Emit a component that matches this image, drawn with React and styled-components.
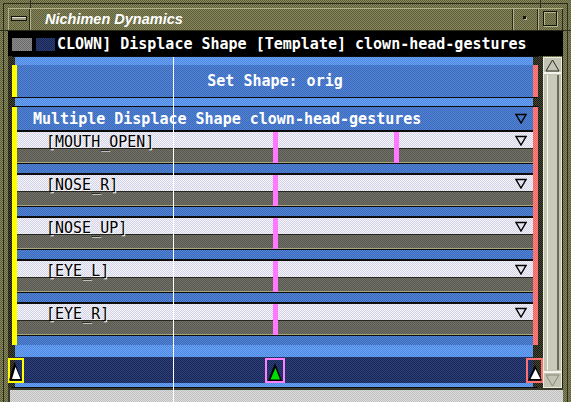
import React from 'react';
import styled, { createGlobalStyle } from 'styled-components';

const dither = (a, b) => `repeating-conic-gradient(${a} 0 25%, ${b} 0 50%) 0 0 / 2px 2px`;

const C = {
  olive: dither('#87875c', '#5e5e3c'),
  dark: dither('#4a4a34', '#1a1a12'),
  lightBlue: dither('#68a2f6', '#4f88dc'),
  blue: dither('#5283d4', '#3c6bbb'),
  navy: dither('#2e4278', '#172558'),
  light: dither('#f4f4fc', '#d2d2e4'),
  gray: dither('#707066', '#5a5a52'),
  status: dither('#dcdcdc', '#c0c0c0'),
  red: dither('#ff8484', '#f26262'),
};

const GlobalStyle = createGlobalStyle`
  html, body { margin: 0; padding: 0; background: #5e5e3c; overflow: hidden; }
  #root { width: 571px; height: 402px; }
`;

const Window = styled.div`
  position: relative;
  width: 571px;
  height: 402px;
  box-sizing: border-box;
  padding: 8px 8px 0;
  background: ${C.olive};
  display: flex;
  flex-direction: column;
  overflow: hidden;
  font-family: "DejaVu Sans Mono", "Liberation Mono", monospace;
`;

const FrameEdge = styled.div`
  position: absolute;
  left: 3px;
  top: 3px;
  right: 3px;
  bottom: -4px;
  border: 1px solid #2c2c1c;
  border-bottom: none;
  pointer-events: none;
`;

const Notch = styled.div`
  position: absolute;
  background: #2c2c1c;
  left: ${p => p.$x}px;
  top: ${p => p.$y}px;
  width: ${p => p.$w}px;
  height: ${p => p.$h}px;
`;

const TitleBar = styled.div`
  display: flex;
  height: 23px;
  flex: none;
  box-sizing: border-box;
  border-top: 1px solid #b2b288;
  border-bottom: 1px solid #2a2a1a;
`;

const TitleCell = styled.div`
  display: flex;
  align-items: center;
  justify-content: ${p => (p.$grow ? 'flex-start' : 'center')};
  flex: ${p => (p.$grow ? '1 1 auto' : `0 0 ${p.$w}px`)};
  box-sizing: border-box;
  border-left: 1px solid #b2b288;
  border-right: 1px solid #2a2a1a;
  padding-left: ${p => (p.$grow ? '14px' : '0')};
`;

const TitleText = styled.span`
  font-family: "Liberation Sans", Arial, sans-serif;
  font-style: italic;
  font-weight: bold;
  font-size: 14.5px;
  color: #ffffff;
  margin-top: -1px;
`;

const MenuGlyph = styled.div`
  width: 14px;
  height: 3px;
  border: 1px solid #141410;
  background: linear-gradient(#e0e0cc 0 1px, #9a9a80 1px);
  margin-top: -2px;
`;

const MinGlyph = styled.div`
  width: 3px;
  height: 3px;
  background: #141410;
  box-shadow: 1px 1px 0 #b8b890;
  margin: -4px 0 0 -2px;
`;

const MaxGlyph = styled.div`
  width: 12px;
  height: 13px;
  border: 1px solid #141410;
  box-shadow: 1px 1px 0 #b8b890, inset 1px 1px 0 #b8b890;
  margin: -2px 0 0 -1px;
`;

const HeaderBar = styled.div`
  display: flex;
  align-items: center;
  height: 25px;
  flex: none;
  background: #000;
  padding-left: 4px;
`;

const Swatch = styled.div`
  width: ${p => p.$w}px;
  height: 13px;
  margin-right: ${p => p.$gap}px;
  background: ${p => p.$bg};
  margin-top: 1px;
`;

const HeaderText = styled.span`
  color: #fff;
  font-weight: bold;
  font-size: 15px;
  white-space: pre;
  margin-top: 1px;
`;

const Main = styled.div`
  display: flex;
  height: 332px;
  flex: none;
`;

const Filler = styled.div`
  flex: 0 0 ${p => p.$w}px;
  background: ${p => p.$bg || C.dark};
`;

const Tracks = styled.div`
  flex: 0 0 526px;
  display: flex;
  flex-direction: column;
  background: ${C.dark};
`;

const Rule = styled.div`
  height: ${p => p.$h}px;
  flex: none;
  background: #0c0c0c;
`;

const Strip = styled.div`
  position: relative;
  height: ${p => p.$h}px;
  flex: none;
  margin: 0 5px 0 3px;
  background: ${p => (p.$navy ? C.navy : C.lightBlue)};
`;

const Lane = styled.div`
  display: flex;
  flex: none;
`;

const EdgeMark = styled.div`
  flex: 0 0 5px;
  background: ${p => (p.$end ? C.red : '#ffff00')};
`;

const SetBar = styled.div`
  flex: 1;
  height: 32px;
  background: ${C.blue};
  display: flex;
  align-items: center;
  justify-content: center;
  color: #fff;
  font-weight: bold;
  font-size: 15px;
  white-space: pre;
`;

const MultiBody = styled.div`
  flex: 1;
  display: flex;
  flex-direction: column;
`;

const MultiHeader = styled.div`
  height: 23px;
  background: ${C.blue};
  display: flex;
  align-items: center;
  justify-content: space-between;
  padding: 0 6px 0 16px;
  color: #fff;
  font-weight: bold;
  font-size: 15px;
  white-space: pre;
`;

const TrackRow = styled.div`
  position: relative;
  display: flex;
  flex-direction: column;
`;

const RowLabel = styled.div`
  height: 16px;
  background: ${C.light};
  display: flex;
  align-items: center;
  justify-content: space-between;
  padding: 0 6px 0 29px;
`;

const LabelText = styled.span`
  position: relative;
  z-index: 1;
  top: 2px;
  color: #000;
  font-size: 15px;
  line-height: 16px;
  white-space: pre;
  text-shadow: 1px 1px 0 #ffffff;
`;

const RowGray = styled.div`
  height: 15px;
  box-sizing: border-box;
  background: ${C.gray};
  border-top: 1px solid #26261e;
  border-bottom: 1px solid #a6a67c;
`;

const RowBlue = styled.div`
  height: 9px;
  background: ${C.blue};
`;

const Key = styled.span`
  position: absolute;
  top: 0;
  left: ${p => p.$x}px;
  width: 5px;
  height: 31px;
  background: #ff78ff;
`;

const Marker = styled.div`
  position: absolute;
  top: 1px;
  left: ${p => p.$x}px;
  width: ${p => p.$w}px;
  height: 25px;
  box-shadow: inset 0 0 0 2px ${p => p.$c};
  display: flex;
`;

const Scroll = styled.div`
  flex: 0 0 19px;
  display: flex;
  flex-direction: column;
  box-sizing: border-box;
  margin-top: 1px;
  background: #c4c4b4;
  border: 1px solid #ececde;
`;

const ScrollArrow = styled.div`
  height: 14px;
  flex: none;
  display: flex;
  align-items: center;
  justify-content: center;
  border-${p => (p.$down ? 'top' : 'bottom')}: 2px solid #f4f4ec;
`;

const Trough = styled.div`
  flex: 1;
  display: flex;
  padding: 1px 2px 1px 3px;
`;

const Thumb = styled.div`
  flex: 1;
  background: #cacaba;
  border-left: 1px solid #f8f8f0;
  border-right: 2px solid #6c6c5e;
`;

const Status = styled.div`
  flex: 1;
  box-sizing: border-box;
  background: ${C.status};
  border-top: 2px solid #3a3a2a;
  border-left: 2px solid #3a3a2a;
`;

const Cursor = styled.div`
  position: absolute;
  left: 173px;
  top: 57px;
  bottom: 0;
  width: 1px;
  background: #ffffff;
`;

const DownTri = () => (
  <svg width="12" height="11" viewBox="0 0 12 11">
    <polygon points="1,1.5 11,1.5 6,10" fill="none" stroke="#000" strokeWidth="1.4" />
  </svg>
);

const rows = [
  { name: 'MOUTH_OPEN', keys: [256, 377] },
  { name: 'NOSE_R', keys: [256] },
  { name: 'NOSE_UP', keys: [256] },
  { name: 'EYE_L', keys: [256] },
  { name: 'EYE_R', keys: [256] },
];

export default function App() {
  return (
    <>
      <GlobalStyle />
      <Window>
        <FrameEdge />
        <Notch $x={30} $y={0} $w={1} $h={8} />
        <Notch $x={540} $y={0} $w={1} $h={8} />
        <Notch $x={0} $y={30} $w={8} $h={1} />
        <Notch $x={563} $y={30} $w={8} $h={1} />
        <TitleBar>
          <TitleCell $w={22}>
            <MenuGlyph />
          </TitleCell>
          <TitleCell $grow>
            <TitleText>Nichimen Dynamics</TitleText>
          </TitleCell>
          <TitleCell $w={25}>
            <MinGlyph />
          </TitleCell>
          <TitleCell $w={25}>
            <MaxGlyph />
          </TitleCell>
        </TitleBar>
        <HeaderBar>
          <Swatch $w={20} $gap={4} $bg={dither('#8c8c8c', '#6c6c6c')} />
          <Swatch $w={19} $gap={2} $bg={dither('#2a3c70', '#1a2858')} />
          <HeaderText>CLOWN] Displace Shape [Template] clown-head-gestures</HeaderText>
        </HeaderBar>
        <Main>
          <Filler $w={4} />
          <Tracks>
            <Rule $h={1} />
            <Strip $h={8} />
            <Lane>
              <EdgeMark />
              <SetBar>Set Shape: orig</SetBar>
              <EdgeMark $end />
            </Lane>
            <Rule $h={1} />
            <Strip $h={8} />
            <Rule $h={1} />
            <Lane>
              <EdgeMark />
              <MultiBody>
                <MultiHeader>
                  <span>Multiple Displace Shape clown-head-gestures</span>
                  <DownTri />
                </MultiHeader>
                <Rule $h={2} />
                {rows.map((r, i) => (
                  <TrackRow key={r.name}>
                    <RowLabel>
                      <LabelText>[{r.name}]</LabelText>
                      <DownTri />
                    </RowLabel>
                    <RowGray />
                    <Rule $h={1} />
                    <RowBlue />
                    {i < rows.length - 1 && <Rule $h={2} />}
                    {r.keys.map(k => (
                      <Key key={k} $x={k} />
                    ))}
                  </TrackRow>
                ))}
              </MultiBody>
              <EdgeMark $end />
            </Lane>
            <Strip $h={12} />
            <Strip $h={26} $navy>
              <Marker $x={-7} $w={16} $c="#ffff00">
                <svg width="16" height="25" viewBox="0 0 16 25">
                  <polygon points="1,22.5 6.5,4 14,22.5" fill="#000" />
                  <polygon points="4,21 7.5,9 12.5,21" fill="#fff" />
                </svg>
              </Marker>
              <Marker $x={250} $w={20} $c="#ff80ff">
                <svg width="20" height="25" viewBox="0 0 20 25">
                  <polygon points="3,23 10,5 17,23" fill="#000" />
                  <polygon points="5.5,21.5 10.5,10 15,21.5" fill="#00e000" />
                </svg>
              </Marker>
              <Marker $x={511} $w={17} $c="#ff7070">
                <svg width="17" height="25" viewBox="0 0 17 25">
                  <polygon points="2,22.5 9,7 16,22.5" fill="#000" />
                  <polygon points="4.5,21 9.5,11 14.5,21" fill="#fff" />
                </svg>
              </Marker>
            </Strip>
            <Strip $h={4} />
            <Rule $h={1} />
          </Tracks>
          <Filler $w={5} />
          <Scroll>
            <ScrollArrow>
              <svg width="15" height="13" viewBox="0 0 15 13">
                <polygon points="7.5,1 1,12 14,12" fill="none" stroke="#2a2a22" strokeWidth="1" />
              </svg>
            </ScrollArrow>
            <Trough>
              <Thumb />
            </Trough>
            <ScrollArrow $down>
              <svg width="15" height="13" viewBox="0 0 15 13">
                <polygon points="1,1 14,1 7.5,12" fill="none" stroke="#8a8a7a" strokeWidth="1" />
              </svg>
            </ScrollArrow>
          </Scroll>
          <Filler $w={1} $bg="#1c1c14" />
        </Main>
        <Status />
        <Cursor />
      </Window>
    </>
  );
}
